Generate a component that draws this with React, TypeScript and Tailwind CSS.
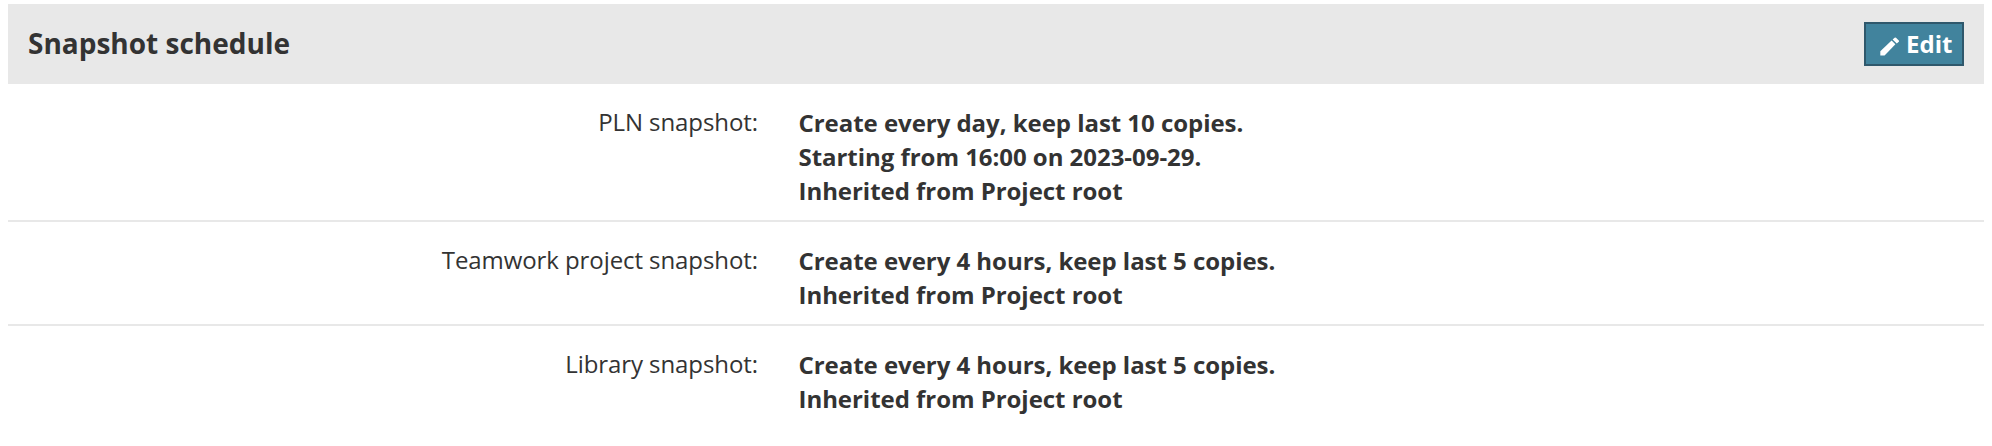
import React from "react";

type Snapshot = {
  label: string;
  lines: string[];
};

const snapshots: Snapshot[] = [
  {
    label: "PLN snapshot:",
    lines: [
      "Create every day, keep last 10 copies.",
      "Starting from 16:00 on 2023-09-29.",
      "Inherited from Project root",
    ],
  },
  {
    label: "Teamwork project snapshot:",
    lines: ["Create every 4 hours, keep last 5 copies.", "Inherited from Project root"],
  },
  {
    label: "Library snapshot:",
    lines: ["Create every 4 hours, keep last 5 copies.", "Inherited from Project root"],
  },
];

const PencilIcon = () => (
  <svg viewBox="0 0 20 19" className="mt-1 h-[19px] w-5 fill-white">
    <path d="M0.3 18.4V14.2L11.6 3.4L15.4 7.2L4.6 18.4Z" />
    <path d="M12.6 2.4L14.6 0.7Q15.3 0.1 16 0.7L18.8 3.4Q19.4 4.1 18.8 4.8L16.8 6.5Z" />
  </svg>
);

const App = () => {
  return (
    <div className="h-[446px] bg-white px-2 pt-1 font-['Open_Sans',sans-serif] text-2xl text-[#333]">
      <div className="flex h-20 items-center justify-between bg-[#e8e8e8] px-5">
        <h2 className="text-[28px] font-bold">Snapshot schedule</h2>
        <button className="flex h-11 w-[100px] items-center gap-1.5 border-2 border-[#2f586c] bg-[#41839d] pl-3.5 font-bold text-white">
          <PencilIcon />
          Edit
        </button>
      </div>
      {snapshots.map((snapshot) => (
        <div
          key={snapshot.label}
          className="flex border-b-2 border-[#e8e8e8] pt-[22px] pb-3 leading-[34px] last:border-b-0"
        >
          <div className="-mt-px w-[750px] text-right tracking-[-0.08px]">{snapshot.label}</div>
          <div className="ml-[40.5px] font-bold tracking-[-0.04px]">
            {snapshot.lines.map((line) => (
              <div key={line}>{line}</div>
            ))}
          </div>
        </div>
      ))}
    </div>
  );
};

export default App;
